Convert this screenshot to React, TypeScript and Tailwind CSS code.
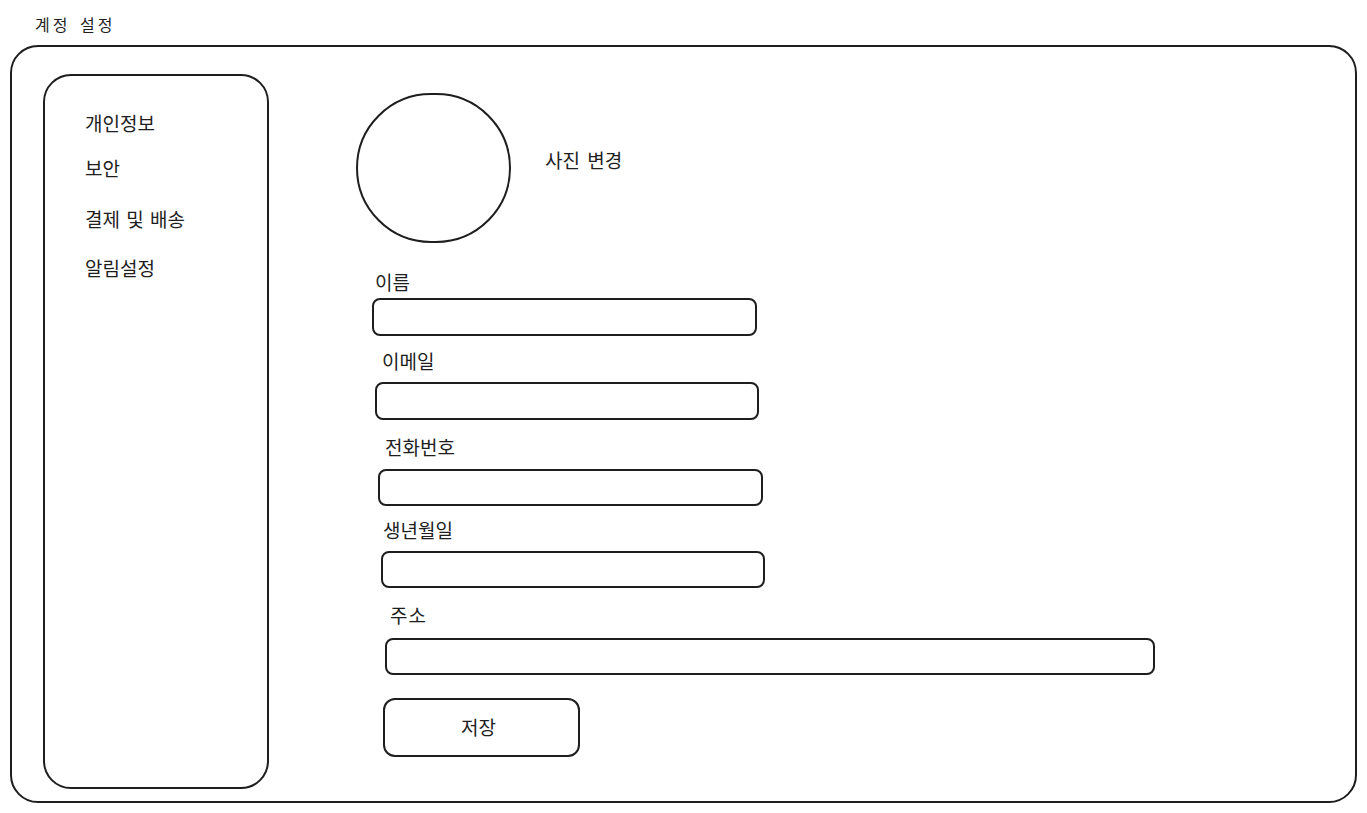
import React from "react";

const font = {
  fontFamily: '"Noto Sans CJK KR", "Noto Sans", sans-serif',
};

export default function App() {
  return (
    <div
      className="w-[1367px] h-[813px] bg-white text-[#1e1e1e] overflow-hidden"
      style={font}
    >
      <div className="pl-[35px] pt-[12px] h-[45px] text-[16px] leading-6 tracking-[3px] [word-spacing:3px]">
        계정 설정
      </div>
      <div className="ml-[10px] w-[1347px] h-[758px] border-2 border-[#1e1e1e] rounded-[28px] flex pl-[31px] pt-[27px]">
        <div className="w-[226px] h-[715px] border-2 border-[#1e1e1e] rounded-[28px] pl-[40px] pt-[35px] text-[19px] flex flex-col">
          <div className="h-6 leading-6">개인정보</div>
          <div className="h-6 leading-6 mt-[21px]">보안</div>
          <div className="h-6 leading-6 mt-[27px] [word-spacing:2px]">결제 및 배송</div>
          <div className="h-6 leading-6 mt-[25px]">알림설정</div>
        </div>
        <div className="ml-[87px] mt-[19px] flex flex-col text-[19px]">
          <div className="flex items-start">
            <div className="w-[155px] h-[150px] rounded-full border-2 border-[#1e1e1e]" />
            <div className="ml-[34px] mt-[55px] h-6 leading-6 [word-spacing:3px]">사진 변경</div>
          </div>
          <div className="ml-[19px] mt-[27px] h-6 leading-6">이름</div>
          <div className="ml-[16px] mt-[4px] w-[385px] h-[38px] border-2 border-[#1e1e1e] rounded-[8px]" />
          <div className="ml-[26px] mt-[13px] h-6 leading-6">이메일</div>
          <div className="ml-[19px] mt-[9px] w-[384px] h-[38px] border-2 border-[#1e1e1e] rounded-[8px]" />
          <div className="ml-[29px] mt-[15px] h-6 leading-6">전화번호</div>
          <div className="ml-[22px] mt-[10px] w-[385px] h-[37px] border-2 border-[#1e1e1e] rounded-[8px]" />
          <div className="ml-[27px] mt-[12px] h-6 leading-6">생년월일</div>
          <div className="ml-[25px] mt-[9px] w-[384px] h-[37px] border-2 border-[#1e1e1e] rounded-[8px]" />
          <div className="ml-[34px] mt-[15px] h-6 leading-6 tracking-[1px]">주소</div>
          <div className="ml-[29px] mt-[11px] w-[770px] h-[37px] border-2 border-[#1e1e1e] rounded-[8px]" />
          <div className="ml-[27px] mt-[23px] w-[197px] h-[59px] border-2 border-[#1e1e1e] rounded-[12px] flex items-center justify-center pr-[6px]">
            저장
          </div>
        </div>
      </div>
    </div>
  );
}
